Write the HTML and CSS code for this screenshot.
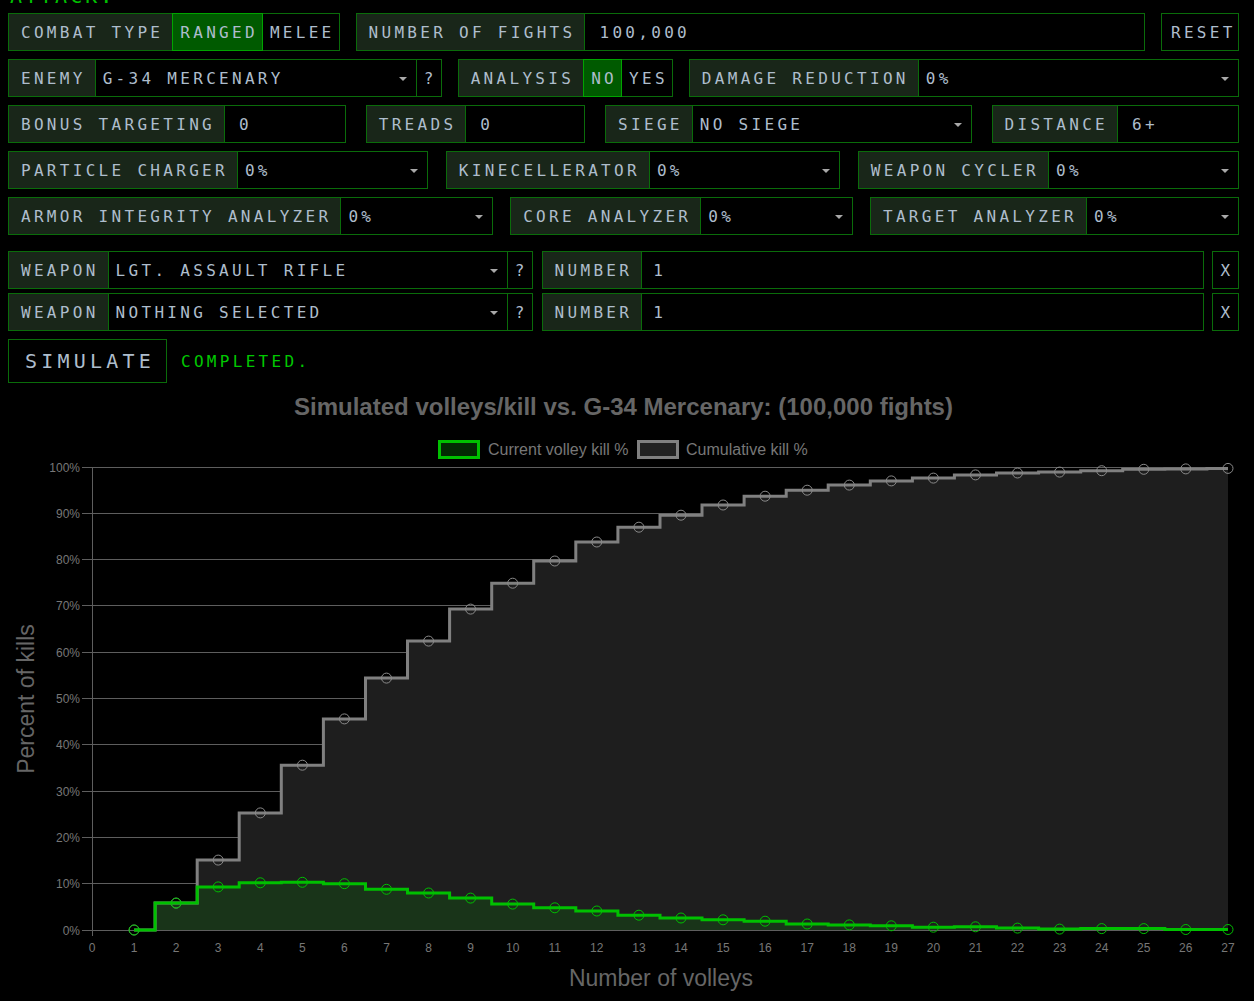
FILE: index.html
```html
<!DOCTYPE html>
<html lang="en">
<head>
<meta charset="utf-8">
<title>Simulator</title>
<link rel="stylesheet" href="styles.css">
</head>
<body>
<div class="page">
  <div class="clip"><div class="heading">Attack:</div></div>

  <div class="row">
    <div class="grp">
      <span class="cell lbl">Combat Type</span>
      <span class="cell tog on">Ranged</span>
      <span class="cell tog">Melee</span>
    </div>
    <div class="grp grow">
      <span class="cell lbl">Number of Fights</span>
      <span class="cell inp grow">100,000</span>
    </div>
    <span class="cell btn">Reset</span>
  </div>

  <div class="row">
    <div class="grp">
      <span class="cell lbl">Enemy</span>
      <span class="cell sel v-enemy">G-34 Mercenary</span>
      <span class="cell q">?</span>
    </div>
    <div class="grp">
      <span class="cell lbl">Analysis</span>
      <span class="cell tog on">No</span>
      <span class="cell tog">Yes</span>
    </div>
    <div class="grp grow">
      <span class="cell lbl">Damage Reduction</span>
      <span class="cell sel grow">0%</span>
    </div>
  </div>

  <div class="row spread">
    <div class="grp">
      <span class="cell lbl">Bonus Targeting</span>
      <span class="cell inp v-bonus">0</span>
    </div>
    <div class="grp">
      <span class="cell lbl">Treads</span>
      <span class="cell inp v-treads">0</span>
    </div>
    <div class="grp">
      <span class="cell lbl">Siege</span>
      <span class="cell sel v-siege">No Siege</span>
    </div>
    <div class="grp">
      <span class="cell lbl">Distance</span>
      <span class="cell inp v-dist">6+</span>
    </div>
  </div>

  <div class="row spread">
    <div class="grp">
      <span class="cell lbl">Particle Charger</span>
      <span class="cell sel v-mod">0%</span>
    </div>
    <div class="grp">
      <span class="cell lbl">Kinecellerator</span>
      <span class="cell sel v-mod">0%</span>
    </div>
    <div class="grp">
      <span class="cell lbl">Weapon Cycler</span>
      <span class="cell sel v-mod">0%</span>
    </div>
  </div>

  <div class="row spread">
    <div class="grp">
      <span class="cell lbl">Armor Integrity Analyzer</span>
      <span class="cell sel v-an">0%</span>
    </div>
    <div class="grp">
      <span class="cell lbl">Core Analyzer</span>
      <span class="cell sel v-an">0%</span>
    </div>
    <div class="grp">
      <span class="cell lbl">Target Analyzer</span>
      <span class="cell sel v-an">0%</span>
    </div>
  </div>

  <div class="row weapons first">
    <div class="grp">
      <span class="cell lbl">Weapon</span>
      <span class="cell sel v-weapon">Lgt. Assault Rifle</span>
      <span class="cell q">?</span>
    </div>
    <div class="grp grow">
      <span class="cell lbl">Number</span>
      <span class="cell inp num grow">1</span>
    </div>
    <span class="cell x">x</span>
  </div>

  <div class="row weapons">
    <div class="grp">
      <span class="cell lbl">Weapon</span>
      <span class="cell sel v-weapon">Nothing selected</span>
      <span class="cell q">?</span>
    </div>
    <div class="grp grow">
      <span class="cell lbl">Number</span>
      <span class="cell inp num grow">1</span>
    </div>
    <span class="cell x">x</span>
  </div>

  <div class="simrow">
    <span class="sim">Simulate</span>
    <span class="status">Completed.</span>
  </div>

  <svg class="chart" viewBox="8 390 1231 611" width="1231" height="611" xmlns="http://www.w3.org/2000/svg">
    <text class="title" x="623.5" y="415" text-anchor="middle">Simulated volleys/kill vs. G-34 Mercenary: (100,000 fights)</text>

    <rect x="439.5" y="441.5" width="39" height="16" fill="#032a03" stroke="#00c000" stroke-width="3"/>
    <text class="legend" x="488" y="455">Current volley kill %</text>
    <rect x="638.5" y="441.5" width="39" height="16" fill="#222222" stroke="#808080" stroke-width="3"/>
    <text class="legend" x="686" y="455">Cumulative kill %</text>

    <g class="grid">
      <line x1="82" y1="467.5" x2="1228" y2="467.5"/>
      <line x1="82" y1="513.5" x2="1228" y2="513.5"/>
      <line x1="82" y1="559.5" x2="1228" y2="559.5"/>
      <line x1="82" y1="605.5" x2="1228" y2="605.5"/>
      <line x1="82" y1="652.5" x2="1228" y2="652.5"/>
      <line x1="82" y1="698.5" x2="1228" y2="698.5"/>
      <line x1="82" y1="744.5" x2="1228" y2="744.5"/>
      <line x1="82" y1="791.5" x2="1228" y2="791.5"/>
      <line x1="82" y1="837.5" x2="1228" y2="837.5"/>
      <line x1="82" y1="883.5" x2="1228" y2="883.5"/>
      <line x1="82" y1="930.5" x2="1228" y2="930.5"/>
      <line x1="92.5" y1="467" x2="92.5" y2="936"/>
    </g>

    <g class="yt" text-anchor="end">
      <text x="80" y="471.5">100%</text>
      <text x="80" y="517.5">90%</text>
      <text x="80" y="563.5">80%</text>
      <text x="80" y="609.5">70%</text>
      <text x="80" y="656.5">60%</text>
      <text x="80" y="702.5">50%</text>
      <text x="80" y="748.5">40%</text>
      <text x="80" y="795.5">30%</text>
      <text x="80" y="841.5">20%</text>
      <text x="80" y="887.5">10%</text>
      <text x="80" y="934.5">0%</text>
    </g>

    <g class="xt" text-anchor="middle">
      <text x="92" y="952">0</text>
      <text x="134.1" y="952">1</text>
      <text x="176.1" y="952">2</text>
      <text x="218.2" y="952">3</text>
      <text x="260.3" y="952">4</text>
      <text x="302.4" y="952">5</text>
      <text x="344.4" y="952">6</text>
      <text x="386.5" y="952">7</text>
      <text x="428.6" y="952">8</text>
      <text x="470.6" y="952">9</text>
      <text x="512.7" y="952">10</text>
      <text x="554.8" y="952">11</text>
      <text x="596.8" y="952">12</text>
      <text x="638.9" y="952">13</text>
      <text x="681" y="952">14</text>
      <text x="723.1" y="952">15</text>
      <text x="765.1" y="952">16</text>
      <text x="807.2" y="952">17</text>
      <text x="849.3" y="952">18</text>
      <text x="891.3" y="952">19</text>
      <text x="933.4" y="952">20</text>
      <text x="975.5" y="952">21</text>
      <text x="1017.5" y="952">22</text>
      <text x="1059.6" y="952">23</text>
      <text x="1101.7" y="952">24</text>
      <text x="1143.8" y="952">25</text>
      <text x="1185.8" y="952">26</text>
      <text x="1228" y="952">27</text>
    </g>

    <text class="axis" x="661" y="986" text-anchor="middle">Number of volleys</text>
    <text class="axis" x="34" y="699" text-anchor="middle" transform="rotate(-90 34 699)">Percent of kills</text>

    <path class="cum-fill" d="M134.1,930 H155.1 V903.1 H197.2 V860.1 H239.2 V812.9 H281.3 V765.2 H323.4 V718.9 H365.5 V678.1 H407.5 V641.1 H449.6 V609.1 H491.7 V583.2 H533.7 V561 H575.8 V542 H617.9 V527.2 H660 V515.2 H702 V505 H744.1 V496.2 H786.2 V490.2 H828.2 V485.1 H870.3 V480.9 H912.4 V478.1 H954.4 V474.9 H996.5 V473 H1038.6 V472.1 H1080.7 V470.7 H1122.7 V469.3 H1164.8 V468.9 H1206.9 V468.4 H1228 V930 Z"/>
    <path class="cur-fill" d="M134.1,930 H155.1 V903.1 H197.2 V886.9 H239.2 V882.8 H281.3 V882.3 H323.4 V883.7 H365.5 V889.3 H407.5 V893 H449.6 V898.1 H491.7 V904.1 H533.7 V907.8 H575.8 V911 H617.9 V915.2 H660 V918 H702 V919.8 H744.1 V921.2 H786.2 V924 H828.2 V924.9 H870.3 V925.8 H912.4 V927.2 H954.4 V926.8 H996.5 V928.1 H1038.6 V929.1 H1080.7 V928.6 H1122.7 V928.6 H1164.8 V929.5 H1206.9 V929.5 H1228 V930 Z"/>

    <path class="cum-line" d="M134.1,930 H155.1 V903.1 H197.2 V860.1 H239.2 V812.9 H281.3 V765.2 H323.4 V718.9 H365.5 V678.1 H407.5 V641.1 H449.6 V609.1 H491.7 V583.2 H533.7 V561 H575.8 V542 H617.9 V527.2 H660 V515.2 H702 V505 H744.1 V496.2 H786.2 V490.2 H828.2 V485.1 H870.3 V480.9 H912.4 V478.1 H954.4 V474.9 H996.5 V473 H1038.6 V472.1 H1080.7 V470.7 H1122.7 V469.3 H1164.8 V468.9 H1206.9 V468.4 H1228"/>
    <g class="cum-pt">
      <circle cx="134.1" cy="930" r="5"/><circle cx="176.1" cy="903.1" r="5"/><circle cx="218.2" cy="860.1" r="5"/>
      <circle cx="260.3" cy="812.9" r="5"/><circle cx="302.4" cy="765.2" r="5"/><circle cx="344.4" cy="718.9" r="5"/>
      <circle cx="386.5" cy="678.1" r="5"/><circle cx="428.6" cy="641.1" r="5"/><circle cx="470.6" cy="609.1" r="5"/>
      <circle cx="512.7" cy="583.2" r="5"/><circle cx="554.8" cy="561" r="5"/><circle cx="596.8" cy="542" r="5"/>
      <circle cx="638.9" cy="527.2" r="5"/><circle cx="681" cy="515.2" r="5"/><circle cx="723.1" cy="505" r="5"/>
      <circle cx="765.1" cy="496.2" r="5"/><circle cx="807.2" cy="490.2" r="5"/><circle cx="849.3" cy="485.1" r="5"/>
      <circle cx="891.3" cy="480.9" r="5"/><circle cx="933.4" cy="478.1" r="5"/><circle cx="975.5" cy="474.9" r="5"/>
      <circle cx="1017.5" cy="473" r="5"/><circle cx="1059.6" cy="472.1" r="5"/><circle cx="1101.7" cy="470.7" r="5"/>
      <circle cx="1143.8" cy="469.3" r="5"/><circle cx="1185.8" cy="468.9" r="5"/><circle cx="1228" cy="468.4" r="5"/>
    </g>

    <path class="cur-line" d="M134.1,930 H155.1 V903.1 H197.2 V886.9 H239.2 V882.8 H281.3 V882.3 H323.4 V883.7 H365.5 V889.3 H407.5 V893 H449.6 V898.1 H491.7 V904.1 H533.7 V907.8 H575.8 V911 H617.9 V915.2 H660 V918 H702 V919.8 H744.1 V921.2 H786.2 V924 H828.2 V924.9 H870.3 V925.8 H912.4 V927.2 H954.4 V926.8 H996.5 V928.1 H1038.6 V929.1 H1080.7 V928.6 H1122.7 V928.6 H1164.8 V929.5 H1206.9 V929.5 H1228"/>
    <g class="cur-pt">
      <circle cx="134.1" cy="930" r="5"/><circle cx="176.1" cy="903.1" r="5"/><circle cx="218.2" cy="886.9" r="5"/>
      <circle cx="260.3" cy="882.8" r="5"/><circle cx="302.4" cy="882.3" r="5"/><circle cx="344.4" cy="883.7" r="5"/>
      <circle cx="386.5" cy="889.3" r="5"/><circle cx="428.6" cy="893" r="5"/><circle cx="470.6" cy="898.1" r="5"/>
      <circle cx="512.7" cy="904.1" r="5"/><circle cx="554.8" cy="907.8" r="5"/><circle cx="596.8" cy="911" r="5"/>
      <circle cx="638.9" cy="915.2" r="5"/><circle cx="681" cy="918" r="5"/><circle cx="723.1" cy="919.8" r="5"/>
      <circle cx="765.1" cy="921.2" r="5"/><circle cx="807.2" cy="924" r="5"/><circle cx="849.3" cy="924.9" r="5"/>
      <circle cx="891.3" cy="925.8" r="5"/><circle cx="933.4" cy="927.2" r="5"/><circle cx="975.5" cy="926.8" r="5"/>
      <circle cx="1017.5" cy="928.1" r="5"/><circle cx="1059.6" cy="929.1" r="5"/><circle cx="1101.7" cy="928.6" r="5"/>
      <circle cx="1143.8" cy="928.6" r="5"/><circle cx="1185.8" cy="929.5" r="5"/><circle cx="1228" cy="929.5" r="5"/>
    </g>
  </svg>
</div>
</body>
</html>
```

FILE: styles.css
```css
html, body {
  margin: 0;
  background: #000;
}

body {
  font-family: "DejaVu Sans Mono", "Liberation Mono", monospace;
  color: #aebdcc;
  overflow: hidden;
}

.page {
  padding: 0 15px 0 8px;
}

.clip {
  height: 5px;
  overflow: hidden;
}

.heading {
  margin-top: -14px;
  padding-left: 2px;
  font-size: 20px;
  line-height: 20px;
  letter-spacing: 3px;
  text-transform: uppercase;
  color: #00c000;
}

.row {
  display: flex;
  height: 38px;
  margin-top: 8px;
  gap: 16px;
}

.row.spread {
  justify-content: space-between;
  gap: 0;
}

.row.weapons {
  margin-top: 4px;
  gap: 8px;
}

.row.weapons.first {
  margin-top: 16px;
}

.grp {
  display: flex;
}

.grow {
  flex: 1 1 0;
  min-width: 0;
}

.cell {
  box-sizing: border-box;
  height: 38px;
  border: 1px solid #0a6c0a;
  display: flex;
  align-items: center;
  white-space: nowrap;
  overflow: hidden;
  font-size: 16px;
  letter-spacing: 3.3px;
  text-transform: uppercase;
}

.grp > .cell + .cell {
  margin-left: -1px;
}

.lbl {
  background: #192619;
  padding: 0 9px 0 12px;
}

.tog {
  padding: 0 4px 0 7px;
}

.tog.on {
  background: #005a00;
  border-color: #00a400;
  position: relative;
  z-index: 1;
}

.inp {
  padding-left: 14px;
}

.inp.num {
  padding-left: 11px;
}

.sel {
  position: relative;
  padding-left: 7px;
}

.sel::after {
  content: "";
  position: absolute;
  right: 9px;
  top: 17px;
  border-left: 4px solid transparent;
  border-right: 4px solid transparent;
  border-top: 4px solid #a9a9a9;
}

.q {
  width: 26px;
  justify-content: center;
  padding-left: 3px;
}

.x {
  width: 27px;
  justify-content: center;
  padding-left: 3px;
}

.btn {
  width: 78px;
  padding-left: 9px;
}

.v-enemy { width: 322px; }
.v-bonus { width: 122px; }
.v-treads { width: 120px; }
.v-siege { width: 280px; }
.v-dist { width: 122px; }
.v-mod { width: 191px; }
.v-an { width: 153px; }
.v-weapon { width: 400px; }

.row.weapons .grp.grow {
  margin-left: 1px;
}

.simrow {
  display: flex;
  align-items: center;
  margin-top: 8px;
}

.sim {
  box-sizing: border-box;
  width: 159px;
  height: 44px;
  border: 1px solid #0a6c0a;
  display: flex;
  align-items: center;
  padding-left: 16px;
  font-size: 20px;
  letter-spacing: 4.2px;
  text-transform: uppercase;
}

.status {
  margin-left: 14px;
  color: #00c800;
  font-size: 16px;
  letter-spacing: 3.3px;
  text-transform: uppercase;
}

.chart {
  display: block;
  margin-top: 7px;
  font-family: "Liberation Sans", Arial, sans-serif;
}

.chart .title {
  font-size: 24px;
  font-weight: bold;
  fill: #666666;
}

.chart .legend {
  font-size: 16px;
  fill: #777777;
}

.chart .grid line {
  stroke: #5e5e5e;
  stroke-width: 1;
}

.chart .yt text,
.chart .xt text {
  font-size: 12px;
  fill: #777777;
}

.chart .axis {
  font-size: 23px;
  fill: #666666;
}

.chart .cum-fill {
  fill: #1e1e1e;
}

.chart .cur-fill {
  fill: #193419;
}

.chart .cum-line {
  fill: none;
  stroke: #808080;
  stroke-width: 3;
}

.chart .cum-pt circle {
  fill: none;
  stroke: #8a8a8a;
  stroke-width: 1;
}

.chart .cur-line {
  fill: none;
  stroke: #00c000;
  stroke-width: 3;
}

.chart .cur-pt circle {
  fill: none;
  stroke: #00c000;
  stroke-width: 1;
}
```
